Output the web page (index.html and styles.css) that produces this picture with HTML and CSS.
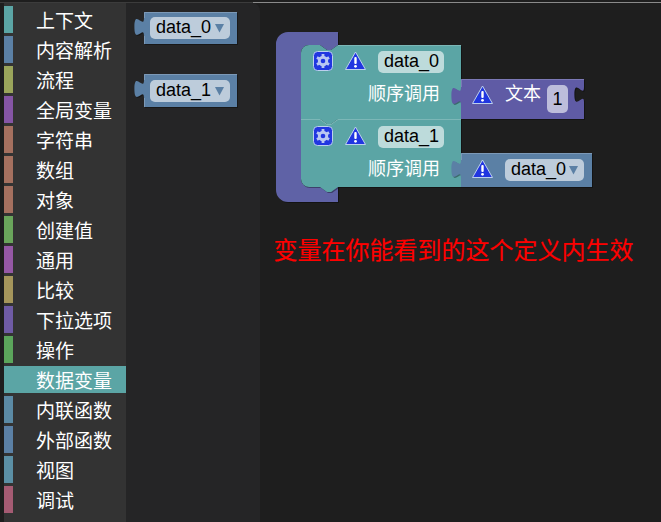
FILE: index.html
```html
<!DOCTYPE html>
<html lang="en">
<head>
    <meta charset="UTF-8">
    <meta name="viewport" content="width=device-width, initial-scale=1.0">
    <title>数据变量</title>
    <link rel="stylesheet" href="styles.css">
</head>
<body>
    <div class="topline"></div>
    <div class="editor">
        <ul class="toolbox">
            <li class="cat"><span class="swatch c-context"></span>上下文</li>
            <li class="cat"><span class="swatch c-parse"></span>内容解析</li>
            <li class="cat"><span class="swatch c-flow"></span>流程</li>
            <li class="cat"><span class="swatch c-global"></span>全局变量</li>
            <li class="cat"><span class="swatch c-string"></span>字符串</li>
            <li class="cat"><span class="swatch c-string"></span>数组</li>
            <li class="cat"><span class="swatch c-string"></span>对象</li>
            <li class="cat"><span class="swatch c-create"></span>创建值</li>
            <li class="cat"><span class="swatch c-common"></span>通用</li>
            <li class="cat"><span class="swatch c-compare"></span>比较</li>
            <li class="cat"><span class="swatch c-select"></span>下拉选项</li>
            <li class="cat"><span class="swatch c-action"></span>操作</li>
            <li class="cat selected"><span class="swatch c-context"></span>数据变量</li>
            <li class="cat"><span class="swatch c-inline"></span>内联函数</li>
            <li class="cat"><span class="swatch c-parse"></span>外部函数</li>
            <li class="cat"><span class="swatch c-view"></span>视图</li>
            <li class="cat"><span class="swatch c-debug"></span>调试</li>
        </ul>

        <div class="flyout">
            <svg class="canvas" width="134" height="519" viewBox="126 3 134 519">
                <defs>
                    <path id="fly0" d="M144 12H237V44H144V36c0-12-9.600 9.600-9.600-9s9.600 3 9.600-9Z"/>
                    <path id="fly1" d="M144 74H237V107H144V98c0-12-9.600 9.600-9.600-9s9.600 3 9.600-9Z"/>
                </defs>
                <use href="#fly0" class="dark" transform="translate(1 1)"/>
                <use href="#fly0" class="blue"/>
                <path class="hl-blue" d="M144.500 44V36M144.500 18V12.500H237"/>
                <rect class="pill pill-blue" x="150" y="17" width="80" height="22" rx="5"/>
                <text class="label" x="156" y="33">data_0</text>
                <path class="arrow" d="M215 24h9l-4.500 8.500Z"/>

                <use href="#fly1" class="dark" transform="translate(1 1)"/>
                <use href="#fly1" class="blue"/>
                <path class="hl-blue" d="M144.500 107V98M144.500 80V74.500H237"/>
                <rect class="pill pill-blue" x="150" y="80" width="80" height="22" rx="5"/>
                <text class="label" x="156" y="96">data_1</text>
                <path class="arrow" d="M215 87h9l-4.500 8.500Z"/>
            </svg>
        </div>

        <div class="workspace">
            <svg class="canvas" width="401" height="519" viewBox="260 3 401 519">
                <defs>
                    <path id="wrap" d="M288 32H338V45l-7 5h-4l-7-5H309a8 8 0 0 0-8 8V179a8 8 0 0 0 8 8H338V202H288a12 12 0 0 1-12-12V44a12 12 0 0 1 12-12Z"/>
                    <path id="seq0" d="M301 53a8 8 0 0 1 8-8H320l7 5h4l7-5H461V119H338l-7 5h-4l-7-5H301Z"/>
                    <path id="seq1" d="M301 119H320l7 5h4l7-5H461V187H338l-7 5h-4l-7-5H309a8 8 0 0 1-8-8Z"/>
                    <path id="txt" d="M461 79H584V87c0 12-9.600-9.600-9.600 7.500s9.600-3 9.600 7.500V119H461V105c0-12-9.600 9.600-9.600-9s9.600 3 9.600-9Z"/>
                    <path id="ref" d="M461 153H592V187H461V178c0-12-9.600 9.600-9.600-9s9.600 3 9.600-9Z"/>
                    <g id="warn">
                        <path class="warn-tri" d="M10.500 1L20.500 18.500H.5Z"/>
                        <rect class="warn-mark" x="9.300" y="6" width="2.400" height="7" rx="1"/>
                        <circle class="warn-mark" cx="10.500" cy="15.300" r="1.400"/>
                    </g>
                    <g id="gear">
                        <rect class="gear-box" x=".5" y=".5" width="19" height="19" rx="4"/>
                        <path class="gear-teeth" d="M10 3V17M3.940 6.500L16.060 13.500M3.940 13.500L16.060 6.500"/>
                        <circle class="gear-ring" cx="10" cy="10" r="5.200"/>
                        <circle class="gear-hole" cx="10" cy="10" r="2.300"/>
                    </g>
                </defs>

                <use href="#wrap" class="dark" transform="translate(1 1)"/>
                <use href="#wrap" class="indigo"/>

                <use href="#seq0" class="dark" transform="translate(1 1)"/>
                <use href="#seq0" class="teal"/>
                <path class="hl-teal" d="M338 45.500H461"/>
                <use href="#gear" x="313" y="51"/>
                <use href="#warn" x="345" y="51"/>
                <rect class="pill pill-teal" x="378" y="51" width="66" height="22" rx="5"/>
                <text class="label" x="384" y="67">data_0</text>
                <text class="label-cn" x="368" y="100">顺序调用</text>

                <use href="#seq1" class="dark" transform="translate(1 1)"/>
                <use href="#seq1" class="teal"/>
                <path class="hl-teal" d="M301 119.500H320l7 5h4l7-5H461"/>
                <use href="#gear" x="313" y="126"/>
                <use href="#warn" x="345" y="126"/>
                <rect class="pill pill-teal" x="378" y="126" width="66" height="22" rx="5"/>
                <text class="label" x="384" y="142">data_1</text>
                <text class="label-cn" x="368" y="175">顺序调用</text>

                <use href="#txt" class="dark" transform="translate(1 1)"/>
                <use href="#txt" class="violet"/>
                <path class="hl-violet" d="M461.500 87V79.500H584"/>
                <use href="#warn" x="472" y="85"/>
                <text class="label-cn" x="505" y="100">文本</text>
                <rect class="pill pill-violet" x="547" y="85" width="21" height="28" rx="5"/>
                <text class="label" x="552.500" y="105">1</text>

                <use href="#ref" class="dark" transform="translate(1 1)"/>
                <use href="#ref" class="blue"/>
                <path class="hl-blue" d="M461.500 160V153.500H592"/>
                <use href="#warn" x="472" y="159"/>
                <rect class="pill pill-blue" x="505" y="159" width="79" height="22" rx="5"/>
                <text class="label" x="511" y="175">data_0</text>
                <path class="arrow" d="M569 166h9l-4.500 8.500Z"/>

                <text class="note" x="273.500" y="259">变量在你能看到的这个定义内生效</text>
            </svg>
        </div>
    </div>
</body>
</html>
```

FILE: styles.css
```css
html, body {
    margin: 0;
    height: 100%;
    overflow: hidden;
    background-color: #1e1e1e;
}

.topline {
    height: 1px;
    margin-top: 2px;
    background: linear-gradient(to right, #3c3c3c 253px, #8a8a8a 253px);
}

.editor {
    display: flex;
    height: 519px;
}

.toolbox {
    width: 122px;
    margin: 0 0 0 4px;
    padding: 3px 0 0;
    list-style: none;
    background-color: #333;
    box-sizing: border-box;
    font-family: "Noto Sans CJK SC", sans-serif;
    font-size: 19px;
    color: #fff;
}

.cat {
    display: flex;
    align-items: center;
    height: 27px;
    margin-bottom: 3px;
    line-height: 27px;
    white-space: nowrap;
}

.cat.selected {
    background-color: #5ba5a5;
}

.swatch {
    width: 9px;
    height: 27px;
    margin-right: 23px;
}

.c-context { background-color: #5ba5a5; }
.c-parse { background-color: #5b80a5; }
.c-flow { background-color: #9aa55b; }
.c-global { background-color: #8555a5; }
.c-string { background-color: #a5705f; }
.c-create { background-color: #6aa55b; }
.c-common { background-color: #9558a5; }
.c-compare { background-color: #a5955b; }
.c-select { background-color: #6f5ba5; }
.c-action { background-color: #5ba55b; }
.c-inline { background-color: #5b8aa5; }
.c-view { background-color: #5b8fa5; }
.c-debug { background-color: #a55b73; }

.flyout {
    width: 134px;
    background-color: #252526;
    border-top-right-radius: 8px;
}

.workspace {
    flex: 1;
}

.canvas {
    display: block;
}

.dark { fill: #000; fill-opacity: .35; }
.blue { fill: #5b80a5; }
.teal { fill: #5ba5a5; }
.indigo { fill: #5f62a6; }
.violet { fill: #5f5ba5; }

.hl-blue, .hl-teal, .hl-violet { fill: none; stroke-width: 1; }
.hl-blue { stroke: #7c99b7; }
.hl-teal { stroke: #7cb7b7; }
.hl-violet { stroke: #7c79b7; }

.pill-blue { fill: #bdccdb; }
.pill-teal { fill: #bddbdb; }
.pill-violet { fill: #bdbddb; }

.label {
    font-family: "Liberation Sans", Arial, sans-serif;
    font-size: 18px;
    fill: #000;
}

.label-cn {
    font-family: "Noto Sans CJK SC", sans-serif;
    font-size: 18px;
    fill: #fff;
}

.arrow { fill: #5b80a5; }

.warn-tri {
    fill: #2136e0;
    stroke: #bcd0ee;
    stroke-width: 1;
    stroke-linejoin: round;
}

.warn-mark { fill: #fff; }

.gear-box {
    fill: #2136e0;
    stroke: #bcd0ee;
    stroke-width: 1;
}

.gear-teeth {
    fill: none;
    stroke: #b9c6f2;
    stroke-width: 2.800;
}

.gear-ring { fill: #b9c6f2; }
.gear-hole { fill: #2136e0; }

.note {
    font-family: "Noto Sans CJK SC", sans-serif;
    font-size: 24px;
    fill: #f00;
    stroke: #f00;
    stroke-width: .15;
}
```
